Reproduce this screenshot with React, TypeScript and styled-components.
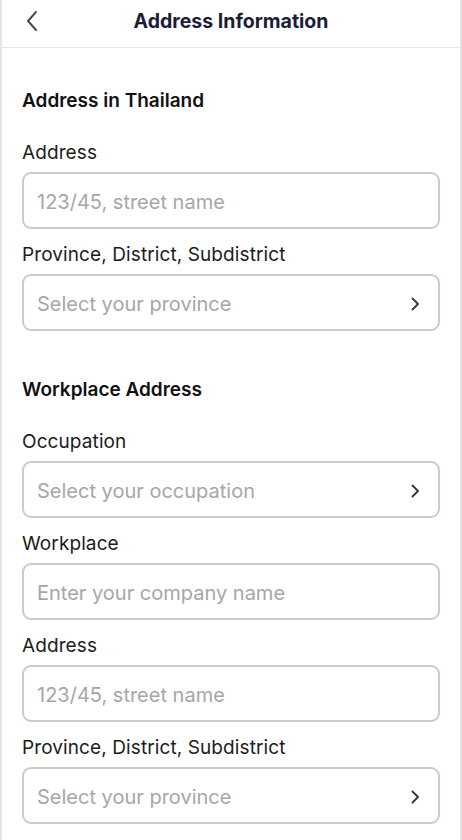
import React from 'react';
import styled, { createGlobalStyle } from 'styled-components';

const GlobalStyle = createGlobalStyle`
  html, body {
    margin: 0;
    padding: 0;
    background: #ffffff;
  }
  body {
    font-family: Inter, "Noto Sans", sans-serif;
    -webkit-font-smoothing: antialiased;
  }
`;

const Page = styled.div`
  width: 462px;
  min-height: 840px;
  box-sizing: border-box;
  border-left: 2px solid #e4e4e6;
  border-right: 2px solid #e4e4e6;
  background: #ffffff;
`;

const Header = styled.header`
  position: relative;
  height: 48px;
  display: flex;
  align-items: center;
  justify-content: center;
  border-bottom: 1px solid #e6e6ea;
  box-sizing: border-box;
`;

const BackButton = styled.button`
  position: absolute;
  left: 18px;
  top: 9px;
  width: 24px;
  height: 24px;
  padding: 0;
  border: none;
  background: none;
  color: #4a4a50;
  display: flex;
  align-items: center;
  justify-content: center;
`;

const HeaderTitle = styled.h1`
  margin: 0;
  margin-top: -6px;
  font-size: 19.5px;
  font-weight: 700;
  color: #1b1d38;
`;

const Content = styled.main`
  padding: 40px 20px 0 20px;
`;

const Section = styled.section`
  & + & {
    margin-top: 46px;
  }
`;

const SectionTitle = styled.h2`
  margin: 0 0 27px 0;
  font-size: 19px;
  line-height: 26px;
  font-weight: 600;
  color: #111114;
`;

const Field = styled.div`
  & + & {
    margin-top: 14px;
  }
`;

const Label = styled.label`
  display: block;
  font-size: 19px;
  line-height: 24px;
  letter-spacing: 0.1px;
  color: #1c1c20;
  margin-bottom: 7px;
`;

const InputBox = styled.div<{ $select?: boolean }>`
  height: 57px;
  box-sizing: border-box;
  border: 2px solid #c9cad6;
  border-radius: 9px;
  display: flex;
  align-items: center;
  padding: 2px 18px 0 13px;
  cursor: ${(p) => (p.$select ? 'pointer' : 'text')};
`;

const Input = styled.input`
  flex: 1;
  border: none;
  outline: none;
  background: transparent;
  padding: 0;
  font-family: Inter, "Noto Sans", sans-serif;
  font-size: 20px;
  color: #1c1c20;
  &::placeholder {
    color: #a6a6aa;
  }
`;

const Placeholder = styled.span`
  flex: 1;
  font-size: 20px;
  color: #a6a6aa;
`;

const Chevron = styled.svg`
  flex: none;
  color: #3a3a40;
`;

type FieldDef = { label: string; placeholder: string; select?: boolean };

const sections: { title: string; fields: FieldDef[] }[] = [
  {
    title: 'Address in Thailand',
    fields: [
      { label: 'Address', placeholder: '123/45, street name' },
      { label: 'Province, District, Subdistrict', placeholder: 'Select your province', select: true },
    ],
  },
  {
    title: 'Workplace Address',
    fields: [
      { label: 'Occupation', placeholder: 'Select your occupation', select: true },
      { label: 'Workplace', placeholder: 'Enter your company name' },
      { label: 'Address', placeholder: '123/45, street name' },
      { label: 'Province, District, Subdistrict', placeholder: 'Select your province', select: true },
    ],
  },
];

const FormField: React.FC<FieldDef> = ({ label, placeholder, select }) => (
  <Field>
    <Label>{label}</Label>
    <InputBox $select={select}>
      {select ? (
        <>
          <Placeholder>{placeholder}</Placeholder>
          <Chevron width="10" height="14" viewBox="0 0 10 14" fill="none">
            <path d="M2.5 1.5 L8 7 L2.5 12.5" stroke="currentColor" strokeWidth="2" strokeLinecap="round" strokeLinejoin="round" />
          </Chevron>
        </>
      ) : (
        <Input placeholder={placeholder} />
      )}
    </InputBox>
  </Field>
);

const App: React.FC = () => {
  return (
    <>
      <GlobalStyle />
      <Page>
        <Header>
          <BackButton aria-label="Back">
            <svg width="14" height="22" viewBox="0 0 14 22" fill="none">
              <path d="M11 2 L3 11 L11 20" stroke="currentColor" strokeWidth="2" strokeLinecap="round" strokeLinejoin="round" />
            </svg>
          </BackButton>
          <HeaderTitle>Address Information</HeaderTitle>
        </Header>
        <Content>
          {sections.map((s) => (
            <Section key={s.title}>
              <SectionTitle>{s.title}</SectionTitle>
              {s.fields.map((f, i) => (
                <FormField key={i} {...f} />
              ))}
            </Section>
          ))}
        </Content>
      </Page>
    </>
  );
};

export default App;
